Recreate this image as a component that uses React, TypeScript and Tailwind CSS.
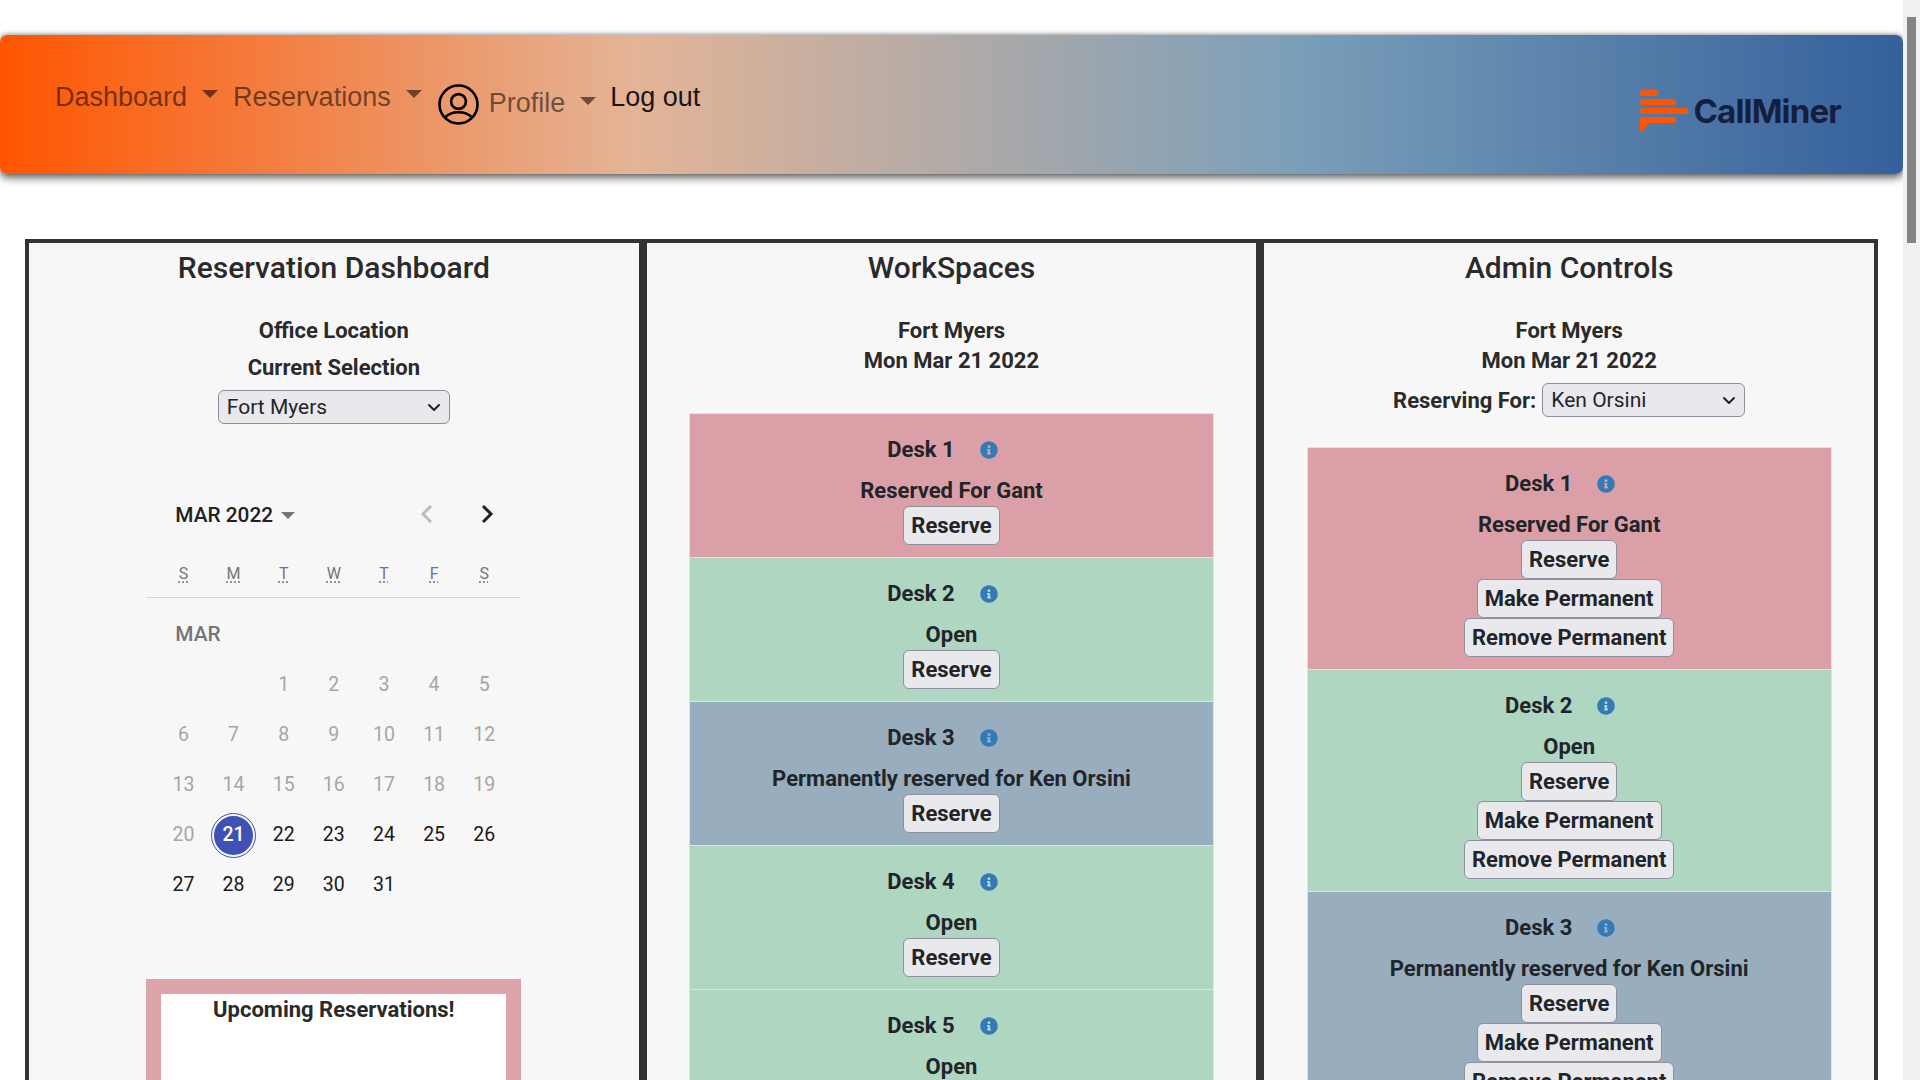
import React from "react";
import { FaInfoCircle } from "react-icons/fa";

function Caret() {
  return <span className="inline-block w-0 h-0 border-l-[8px] border-r-[8px] border-t-[8px] border-l-transparent border-r-transparent border-t-black/55" />;
}

function Nav() {
  return (
    <div className="mt-[35px] h-[139px] rounded-[7px] flex justify-between shadow-[0_4px_8px_rgba(0,0,0,0.6),0_-1px_4px_rgba(0,0,0,0.3)] bg-[linear-gradient(to_right,#ff5500_0%,#e4b496_33.3%,#7b9fb9_68%,#34609b_100%)] font-['Liberation_Sans',sans-serif] text-[27px] leading-[40px]">
      <div className="flex items-start pl-[55px] pt-[42px]">
        <span className="text-black/55">Dashboard</span>
        <span className="ml-[15px] mt-[13px] flex"><Caret /></span>
        <span className="ml-[15px] text-black/55">Reservations</span>
        <span className="ml-[15px] mt-[13px] flex"><Caret /></span>
        <svg className="ml-[16px] mt-[7px]" width="41" height="41" viewBox="0 0 41 41" fill="none" stroke="#000" strokeWidth="2.6">
          <circle cx="20.5" cy="20.5" r="19" />
          <circle cx="20.5" cy="17.5" r="7.4" />
          <path d="M7 33.5C10 30 14 28.2 20.5 28.2S31 30 34 33.5" />
        </svg>
        <span className="ml-[10px] mt-[6px] text-black/55">Profile</span>
        <span className="ml-[15px] mt-[20px] flex"><Caret /></span>
        <span className="ml-[14px] text-black/90">Log out</span>
      </div>
      <div className="flex items-start pr-[62px] pt-[55px]">
        <svg width="48" height="42" viewBox="0 0 48 42" fill="#ff5500">
          <rect x="0" y="0" width="18" height="6" rx="3" />
          <rect x="0" y="9" width="36" height="6" rx="3" />
          <rect x="0" y="18" width="48" height="6" rx="3" />
          <path d="M3 27H33a3 3 0 0 1 0 6H9.5L2 41.5Q0 42.5 0 40V30a3 3 0 0 1 3-3z" />
        </svg>
        <span className="ml-[5px] mt-[1px] font-['Inter'] font-bold text-[33px] leading-[40px] tracking-[-0.8px] text-[#141f3f]">CallMiner</span>
      </div>
    </div>
  );
}

function Select({ label, className }: { label: string; className: string }) {
  return (
    <div className={"flex items-center justify-between h-[34px] rounded-[6px] border border-[#8f8f9d] bg-[#e9e9ed] pl-[8px] pr-[8px] text-[21px] font-normal text-[#212529] " + className}>
      <span className="pt-[2px]">{label}</span>
      <svg width="14" height="9" viewBox="0 0 14 9" fill="none" stroke="#222" strokeWidth="2" strokeLinecap="round" strokeLinejoin="round">
        <path d="M2 2l5 5 5-5" />
      </svg>
    </div>
  );
}

const rows: (number | null)[][] = [
  [null, null, 1, 2, 3, 4, 5],
  [6, 7, 8, 9, 10, 11, 12],
  [13, 14, 15, 16, 17, 18, 19],
  [20, 21, 22, 23, 24, 25, 26],
  [27, 28, 29, 30, 31, null, null],
];

function Calendar() {
  return (
    <div className="mx-auto w-[375px] mt-[70px] font-normal text-left">
      <div className="h-[40px] flex items-center pl-[29px] pr-[27px]">
        <span className="pt-[3px] text-[20.8px] font-medium text-[#212121]">MAR 2022</span>
        <span className="ml-[8px] mt-[2px] w-0 h-0 border-l-[7px] border-r-[7px] border-t-[7px] border-l-transparent border-r-transparent border-t-[#757575]" />
        <svg className="ml-auto" width="14" height="20" viewBox="0 0 14 20" fill="none" stroke="#bdbdbd" strokeWidth="3">
          <path d="M11 2L3 10l8 8" />
        </svg>
        <svg className="ml-[46px]" width="14" height="20" viewBox="0 0 14 20" fill="none" stroke="#212121" strokeWidth="3">
          <path d="M3 2l8 8-8 8" />
        </svg>
      </div>
      <div className="mt-[20px] h-[44px] border-b border-[#d6d6d6] pb-[4px] px-[12px] grid grid-cols-7 items-center text-center text-[16px] leading-[20px] text-[#757575]">
        {["S", "M", "T", "W", "T", "F", "S"].map((d, i) => (
          <span key={i}>
            <span className="underline decoration-dotted underline-offset-[3px]">{d}</span>
          </span>
        ))}
      </div>
      <div className="mt-[21px] h-[30px] pl-[29px] text-[20.8px] leading-[30px] font-medium text-[#757575]">MAR</div>
      <div className="mt-[11px] px-[12px]">
        {rows.map((row, i) => (
          <div key={i} className="grid grid-cols-7 h-[50px] items-center justify-items-center text-[19.5px]">
            {row.map((n, j) => {
              if (n === null) return <span key={j} />;
              if (n === 21)
                return (
                  <span key={j} className="w-[43px] h-[43px] rounded-full flex items-center justify-center bg-[#3f51b5] border-2 border-[#f7f7f7] outline outline-1 outline-[#3f51b5] text-white font-medium">
                    21
                  </span>
                );
              return (
                <span key={j} className={n < 21 ? "text-[#a6a6a6]" : "text-[#1a1a1a]"}>
                  {n}
                </span>
              );
            })}
          </div>
        ))}
      </div>
    </div>
  );
}

function Desk({ n, status, bg, admin }: { n: number; status: string; bg: string; admin?: boolean }) {
  const btn = "block mx-auto h-[39px] px-[7px] rounded-[6px] border border-[#8f8f9d] bg-[#e9e9ed] text-[22px] font-bold leading-[37px] text-[#212529]";
  return (
    <div className={"border border-[#e2e2e2] -mb-px pt-[20px] pb-[12px] text-[#212529] " + bg}>
      <div className="flex justify-center items-center h-[30px] pr-[18px]">
        <span>Desk {n}</span>
        <FaInfoCircle className="ml-[25px] mt-[2px] text-[#337ab7]" size={18} />
      </div>
      <div className="mt-[12px] h-[30px] leading-[30px]">{status}</div>
      <button className={btn}>Reserve</button>
      {admin && <button className={btn}>Make Permanent</button>}
      {admin && <button className={btn}>Remove Permanent</button>}
    </div>
  );
}

const pink = "bg-[#dba0a7]";
const green = "bg-[#aed6c1]";
const blue = "bg-[#98aebf]";

function Panel({ title, children }: { title: string; children: React.ReactNode }) {
  return (
    <div className="border-4 border-b-0 border-[#333] bg-[#f7f7f7] text-center text-[22px] font-bold text-[#2a2a2a]">
      <h1 className="h-[50px] text-[30px] leading-[50px] font-medium">{title}</h1>
      {children}
    </div>
  );
}

export default function App() {
  return (
    <div className="h-screen overflow-hidden flex bg-white font-['Roboto',sans-serif]">
      <div className="w-[1903px] shrink-0">
        <Nav />
        <div className="mt-[65px] ml-[25px] w-[1853px] grid grid-cols-3 h-[2000px]">
          <Panel title="Reservation Dashboard">
            <div className="mt-[23px] leading-[30px]">Office Location</div>
            <div className="mt-[7px] leading-[30px]">Current Selection</div>
            <Select label="Fort Myers" className="w-[232px] mx-auto mt-[7px]" />
            <Calendar />
            <div className="mx-auto mt-[69px] w-[375px] h-[300px] border-[15px] border-[#dda4aa] bg-white leading-[32px]">Upcoming Reservations!</div>
          </Panel>
          <Panel title="WorkSpaces">
            <div className="mt-[23px] leading-[30px]">Fort Myers</div>
            <div className="leading-[30px]">Mon Mar 21 2022</div>
            <div className="w-[525px] mx-auto mt-[37px]">
              <Desk n={1} status="Reserved For Gant" bg={pink} />
              <Desk n={2} status="Open" bg={green} />
              <Desk n={3} status="Permanently reserved for Ken Orsini" bg={blue} />
              <Desk n={4} status="Open" bg={green} />
              <Desk n={5} status="Open" bg={green} />
            </div>
          </Panel>
          <Panel title="Admin Controls">
            <div className="mt-[23px] leading-[30px]">Fort Myers</div>
            <div className="leading-[30px]">Mon Mar 21 2022</div>
            <div className="mt-[7px] flex justify-center items-center">
              <span className="mr-[6px]">Reserving For:</span>
              <Select label="Ken Orsini" className="w-[203px]" />
            </div>
            <div className="w-[525px] mx-auto mt-[30px]">
              <Desk n={1} status="Reserved For Gant" bg={pink} admin />
              <Desk n={2} status="Open" bg={green} admin />
              <Desk n={3} status="Permanently reserved for Ken Orsini" bg={blue} admin />
            </div>
          </Panel>
        </div>
      </div>
      <div className="w-[17px] h-screen bg-[#f1f1f1] pl-[4px] pt-[17px]">
        <div className="w-[9px] h-[226px] bg-[#858585]" />
      </div>
    </div>
  );
}
